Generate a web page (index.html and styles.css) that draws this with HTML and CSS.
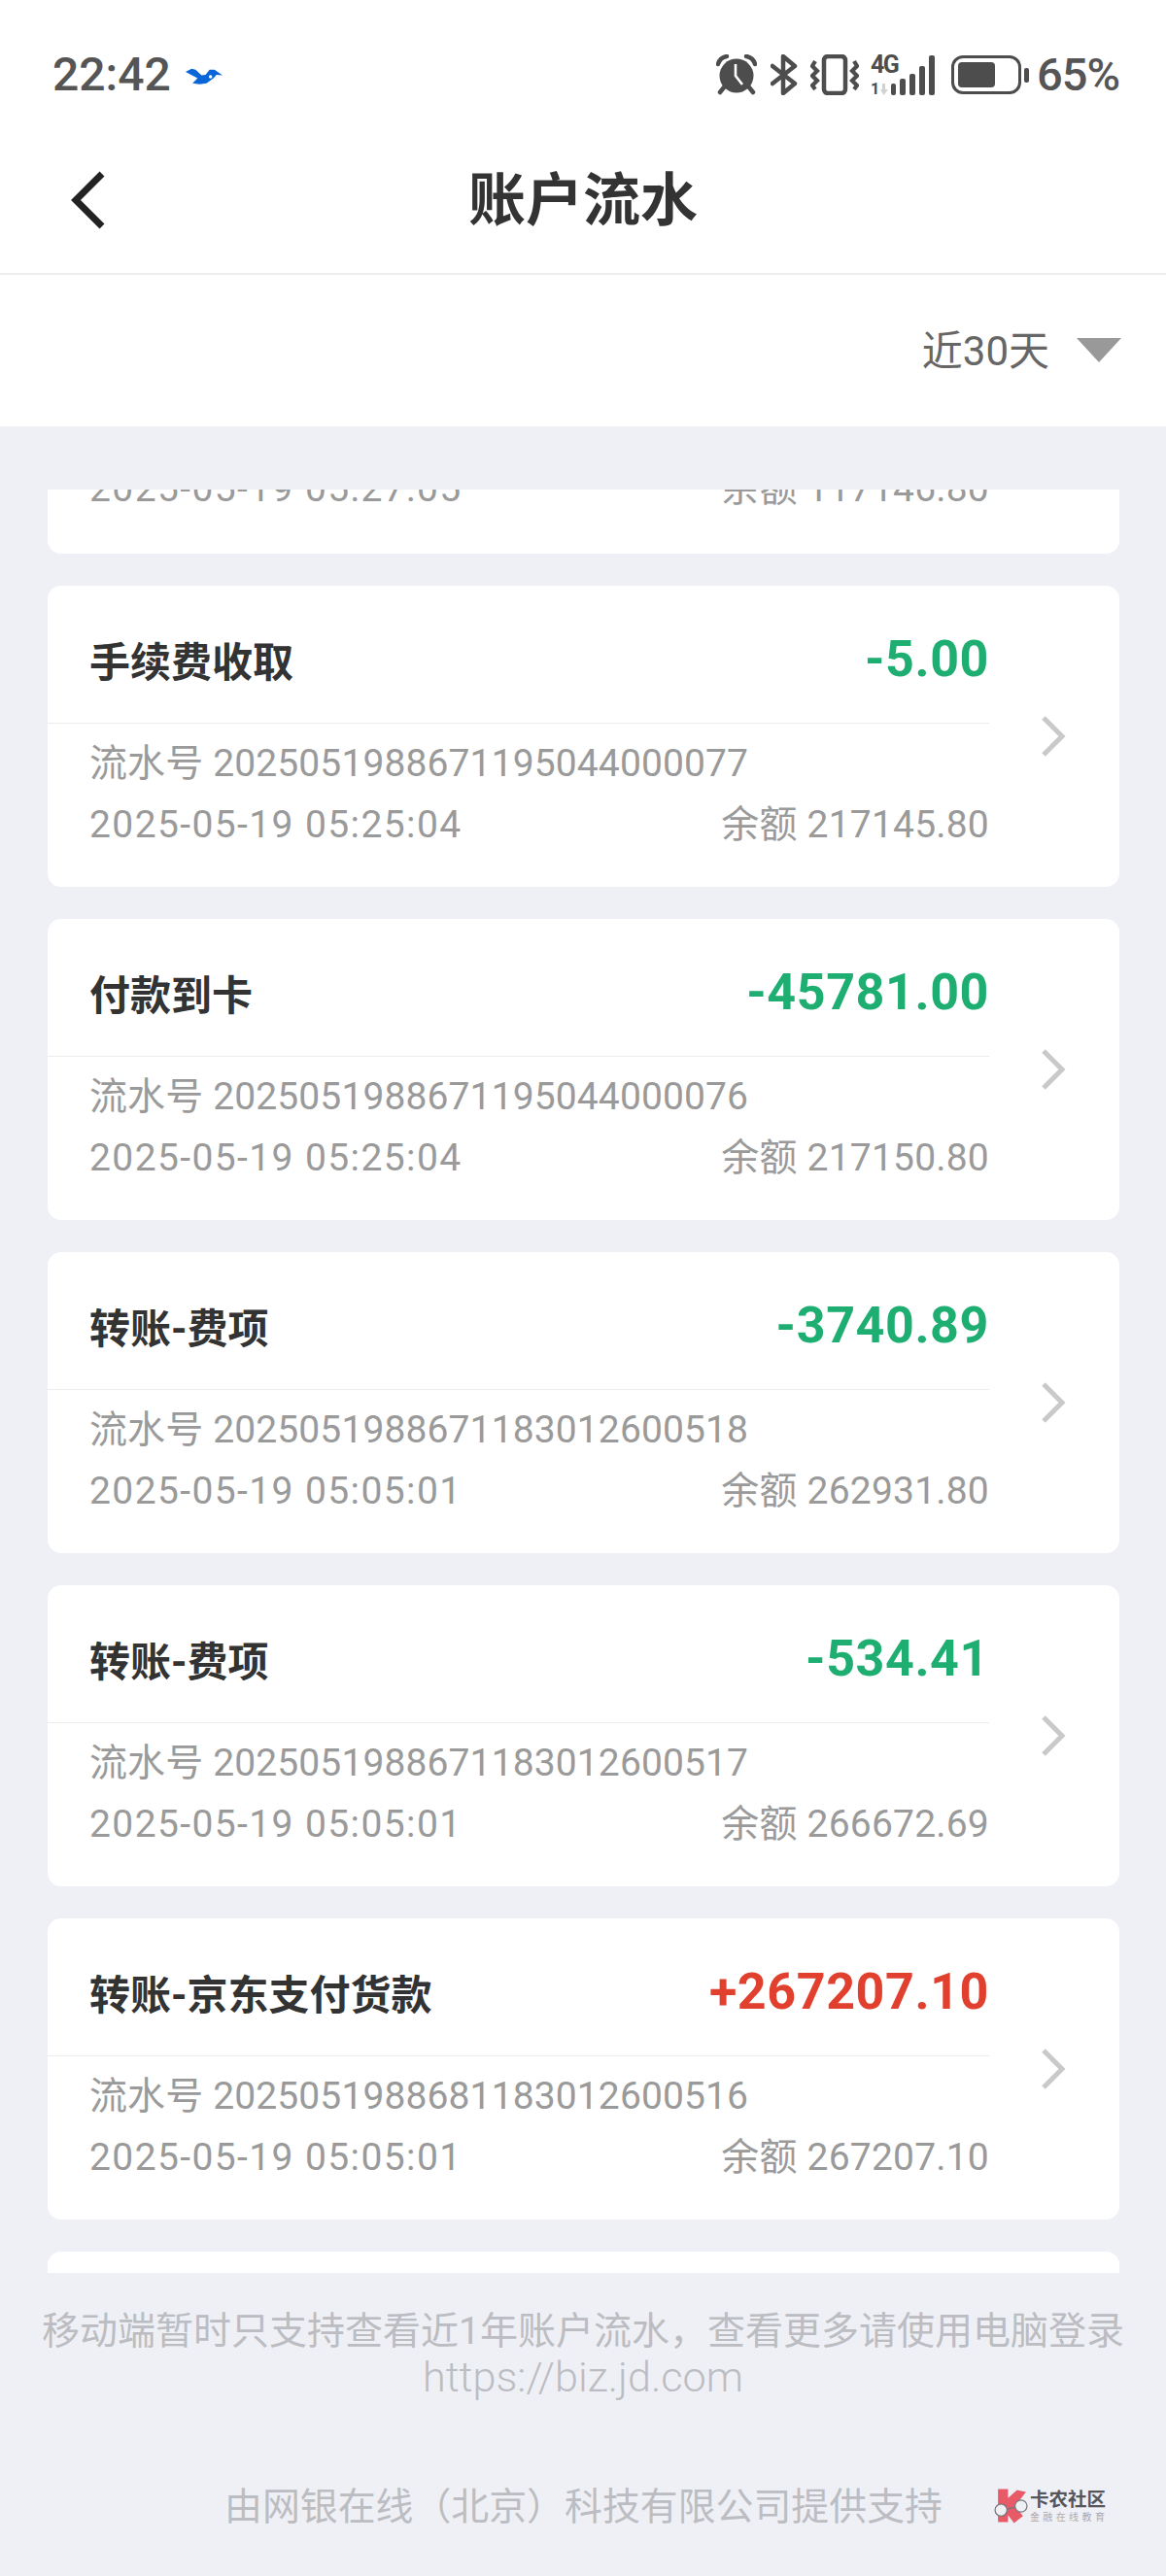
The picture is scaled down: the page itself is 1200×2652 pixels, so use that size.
FILE: index.html
```html
<!DOCTYPE html>
<html lang="zh-CN">
<head>
    <meta charset="UTF-8">
    <meta name="viewport" content="width=device-width, initial-scale=1.0">
    <title>账户流水</title>
    <link rel="stylesheet" href="styles.css">
</head>
<body>
    <div class="top">
        <div class="status">
            <div class="status-left">
                <span class="time">22:42</span>
                <svg class="bird" viewBox="0 0 37 16"><path d="M0 3.5 6 .5 10 1.5 16 7 20 6.5 24 1.5 29 1.5 37 7 31 6.5 28 10 21 15 14 16 7 15 12 10 Z" fill="#0a66d8"/><circle cx="25" cy="8.5" r="1.7" fill="#fff"/></svg>
            </div>
            <div class="status-right">
                <svg class="ic-alarm" viewBox="0 0 42 42">
                    <circle cx="21" cy="22" r="17.5" fill="#4d4d4d"/>
                    <path d="M2 10Q4 3 11 2M40 10Q38 3 31 2M8 34 4 39M34 34 38 39" fill="none" stroke="#4d4d4d" stroke-width="4.5" stroke-linecap="round"/>
                    <path d="M20 10V22L27 31" fill="none" stroke="#fff" stroke-width="2.6"/>
                </svg>
                <svg class="ic-bt" viewBox="0 0 28 42"><path d="M2 12 25 30 13 40V2L25 12 2 30" fill="none" stroke="#4d4d4d" stroke-width="4.5" stroke-linejoin="round" stroke-linecap="round"/></svg>
                <svg class="ic-vib" viewBox="0 0 50 42">
                    <rect x="14" y="2" width="22" height="38" rx="4" fill="none" stroke="#4d4d4d" stroke-width="4.5"/>
                    <path d="M5 7 2 12 7 17 2 22 7 27 2 32 5 36M45 7 48 12 43 17 48 22 43 27 48 32 45 36" fill="none" stroke="#4d4d4d" stroke-width="4.2"/>
                </svg>
                <div class="net">
                    <div class="net-type">
                        <span class="net-4g">4G</span>
                        <span class="net-sim">1<svg class="net-arrow" viewBox="0 0 8 12"><path d="M2 0H5V6H8L3.5 12 0 6H2Z" fill="#d2d2d2"/></svg></span>
                    </div>
                    <div class="bars">
                        <i class="bar bar-1"></i><i class="bar bar-2"></i><i class="bar bar-3"></i><i class="bar bar-4"></i><i class="bar bar-5"></i>
                    </div>
                </div>
                <div class="battery">
                    <div class="battery-body"><div class="battery-fill"></div></div>
                    <div class="battery-nub"></div>
                </div>
                <span class="percent">65%</span>
            </div>
        </div>
        <div class="nav">
            <svg class="back" viewBox="0 0 36 60"><path d="M32 3 5 30 32 57" fill="none" stroke="#222" stroke-width="7"/></svg>
            <h1>账户流水</h1>
        </div>
    </div>

    <div class="filter">
        <span class="filter-label">近30天</span>
        <span class="filter-arrow"></span>
    </div>

    <div class="list">
        <!-- scrolled past the top, only its last line still shows -->
        <div class="card first">
            <div class="card-main">
                <div class="card-body">
                    <p class="line"><span class="stamp">2025-05-19 05:27:05</span><span class="balance">余额 117146.80</span></p>
                </div>
            </div>
        </div>

        <div class="card">
            <div class="card-main">
                <div class="card-head"><span class="name">手续费收取</span><span class="amount out">-5.00</span></div>
                <div class="card-body">
                    <p class="line"><span class="serial">流水号 2025051988671195044000077</span></p>
                    <p class="line"><span class="stamp">2025-05-19 05:25:04</span><span class="balance">余额 217145.80</span></p>
                </div>
            </div>
            <div class="card-go"><svg viewBox="0 0 26 44"><path d="M3 3 22 22 3 41" fill="none" stroke="#c9c9c9" stroke-width="5"/></svg></div>
        </div>

        <div class="card">
            <div class="card-main">
                <div class="card-head"><span class="name">付款到卡</span><span class="amount out">-45781.00</span></div>
                <div class="card-body">
                    <p class="line"><span class="serial">流水号 2025051988671195044000076</span></p>
                    <p class="line"><span class="stamp">2025-05-19 05:25:04</span><span class="balance">余额 217150.80</span></p>
                </div>
            </div>
            <div class="card-go"><svg viewBox="0 0 26 44"><path d="M3 3 22 22 3 41" fill="none" stroke="#c9c9c9" stroke-width="5"/></svg></div>
        </div>

        <div class="card">
            <div class="card-main">
                <div class="card-head"><span class="name">转账-费项</span><span class="amount out">-3740.89</span></div>
                <div class="card-body">
                    <p class="line"><span class="serial">流水号 2025051988671183012600518</span></p>
                    <p class="line"><span class="stamp">2025-05-19 05:05:01</span><span class="balance">余额 262931.80</span></p>
                </div>
            </div>
            <div class="card-go"><svg viewBox="0 0 26 44"><path d="M3 3 22 22 3 41" fill="none" stroke="#c9c9c9" stroke-width="5"/></svg></div>
        </div>

        <div class="card">
            <div class="card-main">
                <div class="card-head"><span class="name">转账-费项</span><span class="amount out">-534.41</span></div>
                <div class="card-body">
                    <p class="line"><span class="serial">流水号 2025051988671183012600517</span></p>
                    <p class="line"><span class="stamp">2025-05-19 05:05:01</span><span class="balance">余额 266672.69</span></p>
                </div>
            </div>
            <div class="card-go"><svg viewBox="0 0 26 44"><path d="M3 3 22 22 3 41" fill="none" stroke="#c9c9c9" stroke-width="5"/></svg></div>
        </div>

        <div class="card">
            <div class="card-main">
                <div class="card-head"><span class="name">转账-京东支付货款</span><span class="amount in">+267207.10</span></div>
                <div class="card-body">
                    <p class="line"><span class="serial">流水号 2025051988681183012600516</span></p>
                    <p class="line"><span class="stamp">2025-05-19 05:05:01</span><span class="balance">余额 267207.10</span></p>
                </div>
            </div>
            <div class="card-go"><svg viewBox="0 0 26 44"><path d="M3 3 22 22 3 41" fill="none" stroke="#c9c9c9" stroke-width="5"/></svg></div>
        </div>

        <div class="card"></div>
    </div>

    <div class="note">
        <p>移动端暂时只支持查看近1年账户流水，查看更多请使用电脑登录</p>
        <p class="note-url">https://biz.jd.com</p>
    </div>

    <div class="footer">
        <span class="support">由网银在线（北京）科技有限公司提供支持</span>
        <div class="logo">
            <svg class="logo-mark" viewBox="0 0 36 34">
                <path d="M5 0H15V9L24 1 33 3 22 17 30 27 21 34 15 26V33H5Z" fill="#e85a68"/>
                <circle cx="8" cy="21" r="6" fill="#eef0f4" stroke="#77777d" stroke-width="1.2"/>
                <circle cx="28" cy="17" r="6" fill="#eef0f4" stroke="#77777d" stroke-width="1.2"/>
                <path d="M14 20 22 18" stroke="#77777d" stroke-width="1.2"/>
            </svg>
            <div class="logo-text">
                <span class="logo-name">卡农社区</span>
                <span class="logo-sub">金融在线教育</span>
            </div>
        </div>
    </div>
</body>
</html>
```

FILE: styles.css
```css
* {
    box-sizing: border-box;
}
body {
    font-family: Roboto, "Noto Sans CJK SC", sans-serif;
    width: 1200px;
    height: 2652px;
    margin: 0;
    overflow: hidden;
    background-color: #eff0f5;
    display: flex;
    flex-direction: column;
}
p {
    margin: 0;
}

/* status bar + title */
.top {
    background-color: #fff;
    height: 283px;
    border-bottom: 2px solid #eeeeee;
}
.status {
    height: 152px;
    padding: 56px 48px 0 54px;
    display: flex;
    justify-content: space-between;
    align-items: flex-start;
    color: #4d4d4d;
}
.status-left {
    display: flex;
    align-items: center;
    height: 42px;
}
.time {
    font-size: 48px;
    line-height: 42px;
    font-weight: 500;
    color: #555;
}
.bird {
    width: 38px;
    height: 17px;
    margin-left: 15px;
    margin-top: 2px;
}
.status-right {
    display: flex;
    align-items: center;
    height: 42px;
}
.ic-alarm {
    width: 42px;
    height: 42px;
}
.ic-bt {
    width: 28px;
    height: 42px;
    margin-left: 14px;
}
.ic-vib {
    width: 50px;
    height: 42px;
    margin-left: 13px;
}
.net {
    display: flex;
    align-items: flex-end;
    width: 66px;
    height: 42px;
    margin-left: 12px;
}
.net-type {
    width: 28px;
    height: 41px;
    display: flex;
    flex-direction: column;
    justify-content: space-between;
    font-weight: 700;
}
.net-4g {
    font-size: 25px;
    line-height: 20px;
    letter-spacing: -1.5px;
}
.net-sim {
    font-size: 16px;
    line-height: 13px;
    display: flex;
    align-items: center;
    gap: 1px;
}
.net-arrow {
    width: 8px;
    height: 12px;
}
.bars {
    display: flex;
    align-items: flex-end;
    gap: 4px;
    margin-left: -7px;
}
.bar {
    display: block;
    width: 6px;
    border-radius: 2px;
    background-color: #4d4d4d;
}
.bar-1 { height: 12px; width: 5px; }
.bar-2 { height: 17px; }
.bar-3 { height: 22px; }
.bar-4 { height: 30px; }
.bar-5 { height: 41px; }
.battery {
    display: flex;
    align-items: center;
    margin-left: 17px;
}
.battery-body {
    width: 72px;
    height: 40px;
    border: 3.5px solid #4d4d4d;
    border-radius: 12px;
    padding: 4px;
}
.battery-fill {
    width: 38px;
    height: 100%;
    border-radius: 4px;
    background-color: #4d4d4d;
}
.battery-nub {
    width: 5px;
    height: 15px;
    border-radius: 2px;
    margin-left: 3px;
    background-color: #4d4d4d;
}
.percent {
    font-size: 47px;
    line-height: 42px;
    font-weight: 500;
    letter-spacing: -1px;
    color: #555;
    margin-left: 8px;
}
.nav {
    height: 129px;
    position: relative;
    display: flex;
    align-items: flex-start;
    justify-content: center;
}
.nav h1 {
    margin: 0;
    font-size: 59px;
    line-height: 110px;
    font-weight: 700;
    color: #333;
}
.back {
    position: absolute;
    left: 73px;
    top: 24px;
    width: 36px;
    height: 60px;
}

/* date filter */
.filter {
    height: 156px;
    background-color: #fff;
    display: flex;
    justify-content: flex-end;
    align-items: center;
    padding: 0 46px 2px 0;
}
.filter-label {
    font-size: 42px;
    color: #666;
    margin-top: -5px;
}
.filter-arrow {
    width: 0;
    height: 0;
    margin-left: 28px;
    border-left: 23px solid transparent;
    border-right: 23px solid transparent;
    border-top: 25px solid #999;
}

/* transactions */
.list {
    height: 1836px;
    margin-top: 65px;
    padding: 0 48px 0 49px;
    overflow: hidden;
    flex-shrink: 0;
}
.card {
    height: 310px;
    margin-bottom: 33px;
    background-color: #fff;
    border-radius: 14px;
    display: flex;
}
.card.first {
    height: 98px;
    margin-top: -32px;
}
.card-main {
    width: 969px;
}
.card-head {
    height: 142px;
    padding: 16px 0 0 43px;
    border-bottom: 1px solid #ececec;
    display: flex;
    justify-content: space-between;
    align-items: center;
}
.name {
    font-size: 42px;
    font-weight: 700;
    color: #333;
    margin-top: -6px;
}
.amount {
    font-size: 52px;
    font-weight: 700;
    letter-spacing: .6px;
    margin-top: -6px;
}
.amount.out {
    color: #1fae72;
}
.amount.in {
    color: #e2402f;
}
.card-body {
    padding: 10px 0 0 43px;
}
.first .card-body {
    padding-top: 0;
}
.line {
    display: flex;
    justify-content: space-between;
    font-size: 39px;
    line-height: 63px;
    color: #9a9a9a;
}
.serial {
    letter-spacing: .12px;
}
.stamp {
    letter-spacing: 1.4px;
}
.balance {
    letter-spacing: .2px;
}
.card-go {
    flex: 1;
    display: flex;
    align-items: center;
    padding-left: 53px;
}
.card-go svg {
    width: 26px;
    height: 44px;
}

/* bottom notice */
.note {
    margin-top: 36px;
    text-align: center;
    font-size: 39px;
    line-height: 48px;
    color: #bcbdc2;
}
.note-url {
    font-size: 43.2px;
    font-weight: 300;
}
.footer {
    margin-top: 75px;
    height: 60px;
    padding-left: 231px;
    display: flex;
    align-items: center;
}
.support {
    font-size: 38.9px;
    color: #bcbdc2;
    white-space: nowrap;
}
.logo {
    display: flex;
    align-items: center;
    margin-left: 52px;
    margin-top: 6px;
}
.logo-mark {
    width: 37px;
    height: 36px;
}
.logo-text {
    display: flex;
    flex-direction: column;
    margin-left: 1px;
}
.logo-name {
    font-size: 19.5px;
    line-height: 22px;
    font-weight: 700;
    color: #55555c;
}
.logo-sub {
    font-size: 10px;
    line-height: 13px;
    letter-spacing: 3.4px;
    color: #aaaab0;
}
```
